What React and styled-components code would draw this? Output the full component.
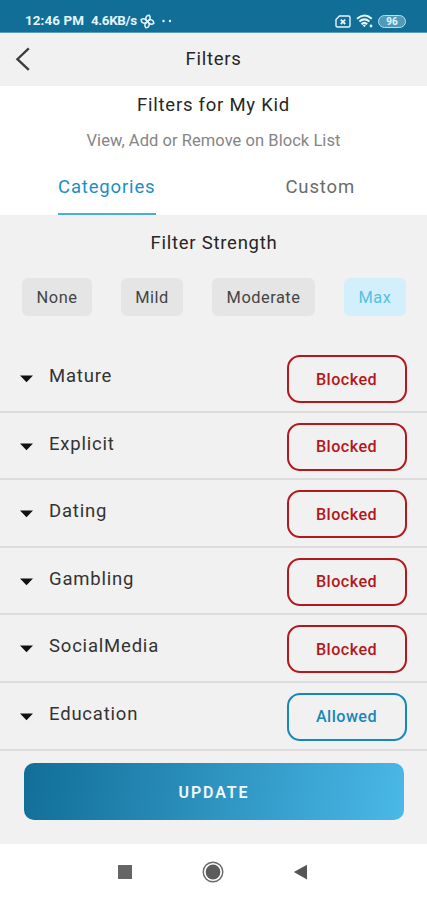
import React, { useState } from 'react'
import styled, { createGlobalStyle, ThemeProvider } from 'styled-components'

const theme = {
  colors: {
    primary: '#116e97',
    secondary: '#1a8fc1',
    light: '#4ab8e8',
    background: '#f1f1f1',
    blocked: '#b3181c',
    allowed: '#1787b9',
  }
}

const categories = [
  { name: 'Mature', blocked: true },
  { name: 'Explicit', blocked: true },
  { name: 'Dating', blocked: true },
  { name: 'Gambling', blocked: true },
  { name: 'SocialMedia', blocked: true },
  { name: 'Education', blocked: false },
]

const strengths = [
  { name: 'None', width: 70 },
  { name: 'Mild', width: 62 },
  { name: 'Moderate', width: 103 },
  { name: 'Max', width: 62 },
]

const GlobalStyle = createGlobalStyle`
  * {
    box-sizing: border-box;
  }
  body {
    margin: 0;
    font-family: Roboto, "Liberation Sans", sans-serif;
    background: #fff;
  }
  button {
    font-family: inherit;
    padding: 0;
    border: none;
    background: none;
    cursor: pointer;
  }
`

const Screen = styled.div`
  width: 427px;
  height: 900px;
  display: flex;
  flex-direction: column;
  overflow: hidden;
  background: ${props => props.theme.colors.background};
`

const StatusBar = styled.div`
  height: 33px;
  flex: none;
  display: flex;
  justify-content: space-between;
  padding: 13px 21px 0 25px;
  color: #e4f5fb;
  background: ${props => props.theme.colors.primary};
  border-bottom: 1px solid #5c9dba;
`

const StatusGroup = styled.div`
  height: 16px;
  display: flex;
  align-items: center;
  gap: ${props => props.$gap};
  svg {
    display: block;
  }
`

const StatusText = styled.span`
  font-size: 13.4px;
  line-height: 16px;
  font-weight: bold;
  white-space: nowrap;
  letter-spacing: ${props => props.$spacing || '0'};
`

const Battery = styled.span`
  width: 28px;
  height: 13px;
  border: 1.5px solid #b9deec;
  border-radius: 7px;
  background: #4f9abb;
  font-size: 10px;
  line-height: 11px;
  font-weight: bold;
  text-align: center;
`

const Header = styled.div`
  height: 53px;
  flex: none;
  display: grid;
  grid-template-columns: 60px 1fr 60px;
  align-items: center;
  padding-bottom: 2px;
  text-align: center;
`

const BackButton = styled.button`
  height: 24px;
  padding-left: 15px;
  svg {
    display: block;
  }
`

const Title = styled.h1`
  margin: 0;
  font-size: 18.5px;
  line-height: 24px;
  font-weight: normal;
  letter-spacing: 0.75px;
  color: #262626;
`

const Intro = styled.div`
  height: 129px;
  flex: none;
  display: flex;
  flex-direction: column;
  align-items: center;
  padding-top: 7px;
  background: #fff;
`

const Subtitle = styled.p`
  margin: 13px 0 0;
  font-size: 16.5px;
  line-height: 22px;
  letter-spacing: 0.05px;
  color: #858585;
`

const Tabs = styled.div`
  width: 100%;
  margin-top: auto;
  display: grid;
  grid-template-columns: 1fr 1fr;
  justify-items: center;
`

const Tab = styled.button`
  height: 42px;
  padding-bottom: 12px;
  font-size: 18.5px;
  line-height: 28px;
  letter-spacing: 0.85px;
  border-bottom: 2px solid ${props => props.$active ? '#4baed4' : 'transparent'};
  color: ${props => props.$active ? props.theme.colors.secondary : '#6b6b6b'};
`

const Strength = styled.div`
  height: 130px;
  flex: none;
  padding: 16px 21px 0 22px;
  text-align: center;
`

const StrengthOptions = styled.div`
  display: flex;
  justify-content: space-between;
  margin-top: 23px;
`

const StrengthButton = styled.button`
  height: 38px;
  width: ${props => props.$width}px;
  border-radius: 6px;
  font-size: 16.4px;
  letter-spacing: 0.5px;
  color: ${props => props.$active ? '#58bfe3' : '#444'};
  background: ${props => props.$active ? '#d3effc' : '#e5e5e5'};
`

const CategoryRow = styled.div`
  height: 67.6px;
  flex: none;
  display: flex;
  align-items: flex-start;
  padding: 10px 20px 0;
  border-bottom: 2px solid #dcdcdc;
  svg {
    flex: none;
    margin-top: 20px;
  }
`

const CategoryName = styled.span`
  flex: 1;
  padding: 9px 0 0 16px;
  font-size: 18.5px;
  line-height: 24px;
  letter-spacing: 0.8px;
  color: #333;
`

const StateButton = styled.button`
  width: 120px;
  height: 48px;
  border: 2px solid;
  border-radius: 13px;
  font-size: 16.2px;
  font-weight: 500;
  letter-spacing: 0.45px;
  padding-right: 1px;
  color: ${props => props.$blocked ? props.theme.colors.blocked : props.theme.colors.allowed};
`

const UpdateButton = styled.button`
  height: 57px;
  flex: none;
  margin: 12.4px 23px 0 24px;
  padding-top: 2px;
  border-radius: 10px;
  font-size: 16px;
  font-weight: 600;
  letter-spacing: 1.9px;
  color: #f1fbff;
  background: linear-gradient(100deg, ${props => props.theme.colors.primary}, ${props => props.theme.colors.light});
`

const NavBar = styled.div`
  height: 56px;
  flex: none;
  margin-top: auto;
  display: flex;
  justify-content: center;
  align-items: center;
  gap: 69px;
  padding-right: 1px;
  background: #fff;
`

const FanIcon = () => (
  <svg width="15" height="15" viewBox="0 0 15 15" fill="none" stroke="currentColor" strokeWidth="1.5">
    <path d="M7.5 7.5C4.5 5.5 5.6 1.2 9.3 1.2C11 3.4 10.2 5.8 7.5 7.5Z" />
    <path d="M7.5 7.5C9.5 4.5 13.8 5.6 13.8 9.3C11.6 11 9.2 10.2 7.5 7.5Z" />
    <path d="M7.5 7.5C10.5 9.5 9.4 13.8 5.7 13.8C4 11.6 4.8 9.2 7.5 7.5Z" />
    <path d="M7.5 7.5C5.5 10.5 1.2 9.4 1.2 5.7C3.4 4 5.8 4.8 7.5 7.5Z" />
  </svg>
)

const DotsIcon = () => (
  <svg width="10" height="4" viewBox="0 0 10 4" fill="currentColor">
    <circle cx="1.5" cy="2" r="1.2" />
    <circle cx="8" cy="2" r="1.2" />
  </svg>
)

const SimIcon = () => (
  <svg width="16" height="13" viewBox="0 0 16 13" fill="none" stroke="currentColor" strokeWidth="1.4">
    <path d="M4.5 1H13.5Q15 1 15 2.5V10.5Q15 12 13.5 12H2.5Q1 12 1 10.5V4.5Z" />
    <path d="M5.8 4.6L10.2 9M10.2 4.6L5.8 9" strokeWidth="1.8" />
  </svg>
)

const WifiIcon = () => (
  <svg width="17" height="14" viewBox="0 0 17 14" fill="none" stroke="currentColor" strokeWidth="2.1">
    <path d="M1 4.7Q8.3 -1.7 15.8 4.7" />
    <path d="M3.4 7.5Q8.3 3.2 13.4 7.5" />
    <path d="M5.5 10.2Q8.3 7.6 11.2 10.2" />
    <path d="M6.5 10.8H10.2L8.3 13.3Z" fill="currentColor" stroke="none" />
    <circle cx="15" cy="12" r="1.4" fill="currentColor" stroke="none" />
  </svg>
)

const BackIcon = () => (
  <svg width="16" height="24" viewBox="0 0 16 24" fill="none" stroke="#3c3c3c" strokeWidth="2.3">
    <path d="M13.8 1.3L2.4 12.2L13.8 22.8" />
  </svg>
)

const CaretIcon = () => (
  <svg width="13" height="8" viewBox="0 0 13 8" fill="#111">
    <path d="M0 0.5H13L6.5 7.3Z" />
  </svg>
)

const NavIcons = () => (
  <>
    <svg width="16" height="16" viewBox="0 0 16 16" fill="#656565">
      <rect x="1" y="1" width="14" height="14" />
    </svg>
    <svg width="22" height="22" viewBox="0 0 22 22">
      <circle cx="11" cy="11" r="9.8" fill="none" stroke="#686868" strokeWidth="1.4" />
      <circle cx="11" cy="11" r="7.4" fill="#5c5c5c" />
    </svg>
    <svg width="16" height="16" viewBox="0 0 16 16" fill="#565656">
      <path d="M0.8 8L14 0.7V15.5Z" />
    </svg>
  </>
)

const App = () => {
  const [tab, setTab] = useState('Categories')
  const [strength, setStrength] = useState('Max')

  return (
    <ThemeProvider theme={theme}>
      <GlobalStyle />
      <Screen>
        <StatusBar>
          <StatusGroup $gap="7px">
            <StatusText $spacing="0.1px">12:46 PM</StatusText>
            <StatusGroup $gap="3px">
              <StatusText $spacing="-0.35px">4.6KB/s</StatusText>
              <FanIcon />
            </StatusGroup>
            <DotsIcon />
          </StatusGroup>
          <StatusGroup $gap="5px">
            <SimIcon />
            <WifiIcon />
            <Battery>96</Battery>
          </StatusGroup>
        </StatusBar>
        <Header>
          <BackButton><BackIcon /></BackButton>
          <Title>Filters</Title>
        </Header>
        <Intro>
          <Title>Filters for My Kid</Title>
          <Subtitle>View, Add or Remove on Block List</Subtitle>
          <Tabs>
            {['Categories', 'Custom'].map(name => (
              <Tab key={name} $active={tab === name} onClick={() => setTab(name)}>{name}</Tab>
            ))}
          </Tabs>
        </Intro>
        <Strength>
          <Title>Filter Strength</Title>
          <StrengthOptions>
            {strengths.map(({ name, width }) => (
              <StrengthButton
                key={name}
                $width={width}
                $active={strength === name}
                onClick={() => setStrength(name)}
              >
                {name}
              </StrengthButton>
            ))}
          </StrengthOptions>
        </Strength>
        {categories.map(({ name, blocked }) => (
          <CategoryRow key={name}>
            <CaretIcon />
            <CategoryName>{name}</CategoryName>
            <StateButton $blocked={blocked}>{blocked ? 'Blocked' : 'Allowed'}</StateButton>
          </CategoryRow>
        ))}
        <UpdateButton>UPDATE</UpdateButton>
        <NavBar><NavIcons /></NavBar>
      </Screen>
    </ThemeProvider>
  )
}

export default App
